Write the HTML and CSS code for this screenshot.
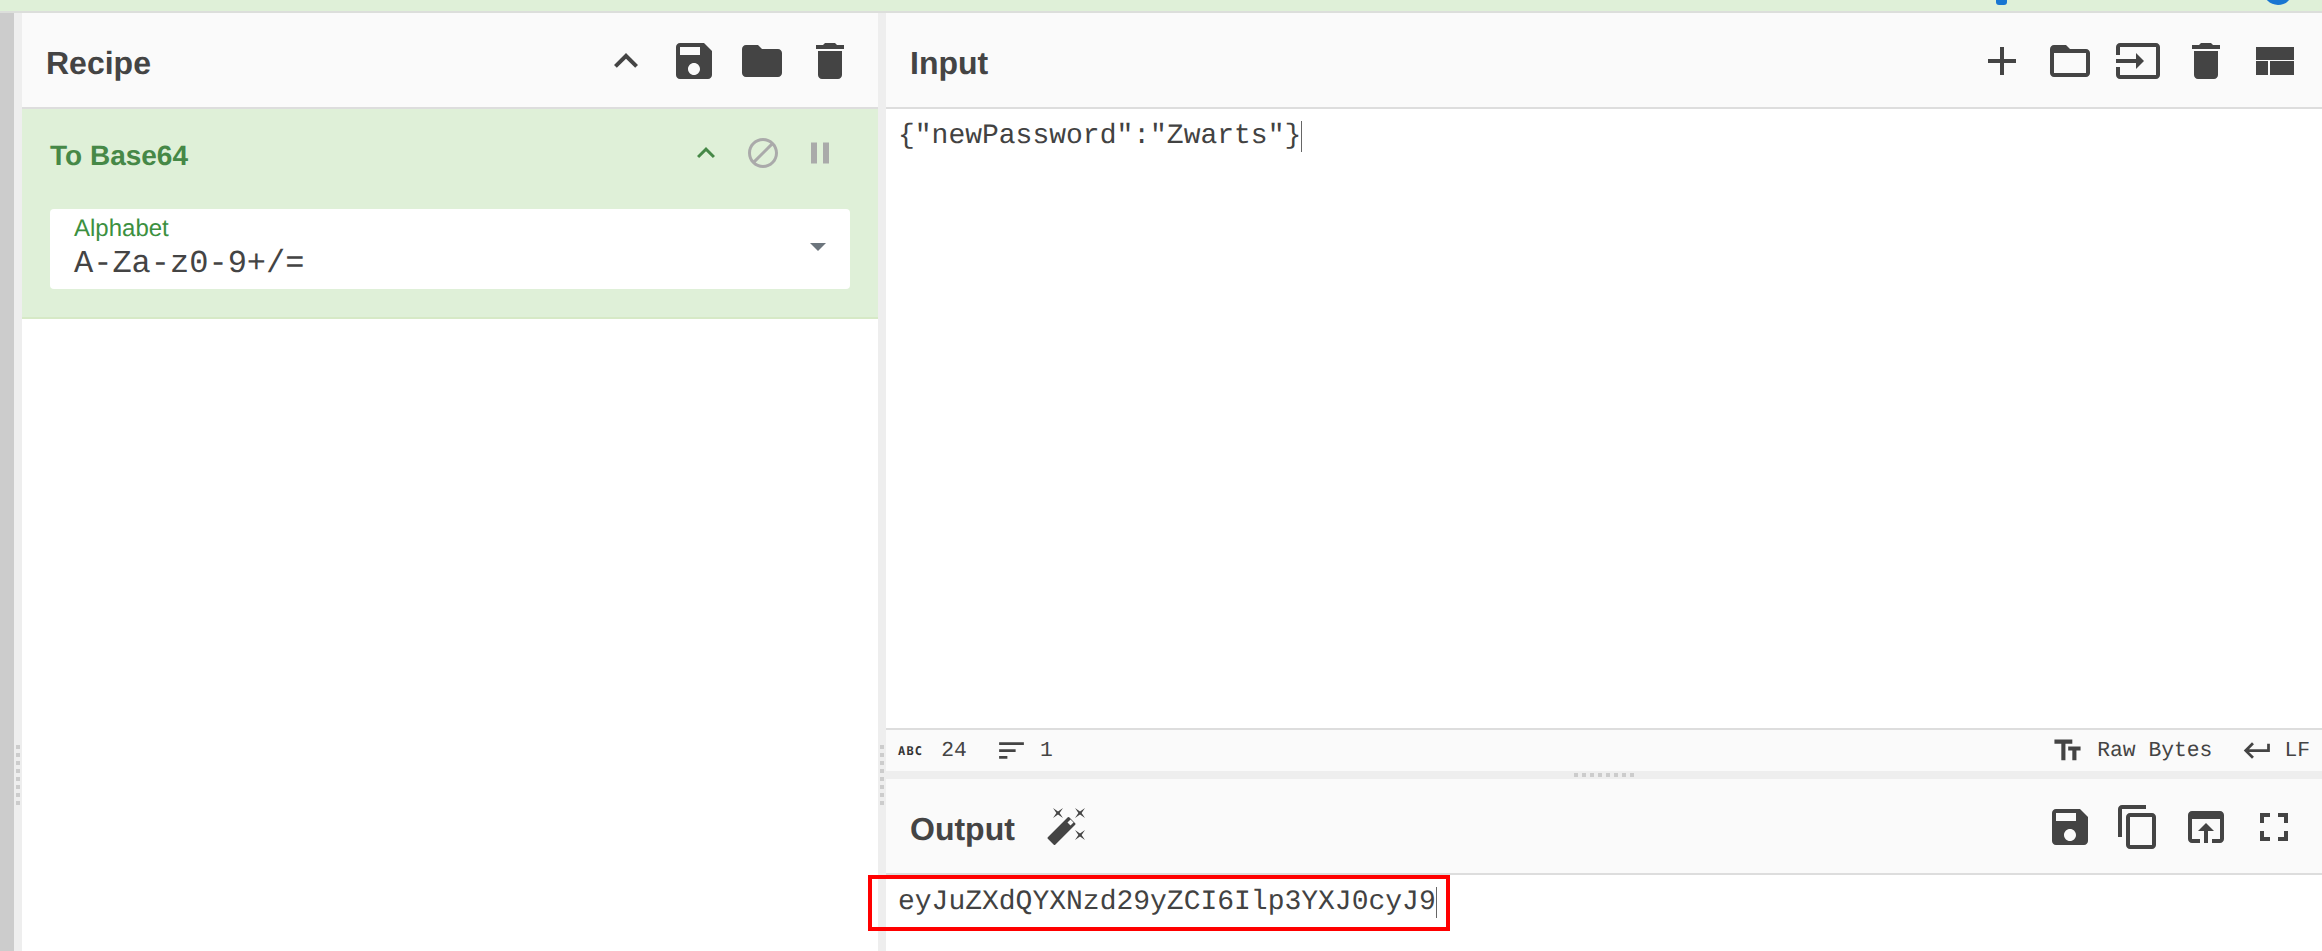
FILE: index.html
```html
<!DOCTYPE html>
<html lang="en">
<head>
<meta charset="utf-8">
<title>CyberChef</title>
<link rel="stylesheet" href="styles.css">
</head>
<body>
<div class="topstrip">
  <span class="blue-tick"></span>
  <span class="blue-dot"></span>
</div>
<main class="workspace">
  <div class="rail"></div>
  <div class="gutter-v"></div>
  <section class="recipe">
    <header class="panel-head">
      <h1 class="title">Recipe</h1>
      <div class="tools">
        <svg class="ico" viewBox="0 0 24 24"><path d="M7.41 15.41L12 10.83l4.59 4.58L18 14l-6-6-6 6z"/></svg>
        <svg class="ico" viewBox="0 0 24 24"><path d="M17 3H5c-1.11 0-2 .9-2 2v14c0 1.1.89 2 2 2h14c1.1 0 2-.9 2-2V7l-4-4zm-5 16c-1.66 0-3-1.34-3-3s1.34-3 3-3 3 1.34 3 3-1.34 3-3 3zm3-10H5V5h10v4z"/></svg>
        <svg class="ico" viewBox="0 0 24 24"><path d="M10 4H4c-1.1 0-1.99.9-1.99 2L2 18c0 1.1.9 2 2 2h16c1.1 0 2-.9 2-2V8c0-1.1-.9-2-2-2h-8l-2-2z"/></svg>
        <svg class="ico" viewBox="0 0 24 24"><path d="M6 19c0 1.1.9 2 2 2h8c1.1 0 2-.9 2-2V7H6v12zM19 4h-3.5l-1-1h-5l-1 1H5v2h14V4z"/></svg>
      </div>
    </header>
    <div class="op">
      <div class="op-head">
        <h2 class="op-name">To Base64</h2>
        <div class="op-tools">
          <svg class="ico-s green" viewBox="0 0 24 24"><path d="M7.41 15.41L12 10.83l4.59 4.58L18 14l-6-6-6 6z"/></svg>
          <svg class="ico-s grey" viewBox="0 0 24 24"><path d="M12 2C6.48 2 2 6.48 2 12s4.48 10 10 10 10-4.48 10-10S17.52 2 12 2zM4 12c0-4.42 3.58-8 8-8 1.85 0 3.55.63 4.9 1.69L5.69 16.9C4.63 15.55 4 13.85 4 12zm8 8c-1.85 0-3.55-.63-4.9-1.69L18.31 7.1C19.37 8.45 20 10.15 20 12c0 4.42-3.58 8-8 8z"/></svg>
          <svg class="ico-s grey" viewBox="0 0 24 24"><path d="M6 19h4V5H6v14zm8-14v14h4V5h-4z"/></svg>
        </div>
      </div>
      <div class="field">
        <div class="field-body">
          <div class="field-label">Alphabet</div>
          <div class="field-value">A-Za-z0-9+/=</div>
        </div>
        <span class="caret"></span>
      </div>
    </div>
  </section>
  <div class="gutter-v"></div>
  <section class="io">
    <header class="panel-head">
      <h1 class="title">Input</h1>
      <div class="tools">
        <svg class="ico" viewBox="0 0 24 24"><path d="M19 13h-6v6h-2v-6H5v-2h6V5h2v6h6v2z"/></svg>
        <svg class="ico" viewBox="0 0 24 24"><path d="M20 6h-8l-2-2H4c-1.1 0-1.99.9-1.99 2L2 18c0 1.1.9 2 2 2h16c1.1 0 2-.9 2-2V8c0-1.1-.9-2-2-2zm0 12H4V8h16v10z"/></svg>
        <svg class="ico" viewBox="0 0 24 24"><path d="M21 3.01H3c-1.1 0-2 .9-2 2V9h2V4.99h18v14.03H3V15H1v4.01c0 1.1.9 1.98 2 1.98h18c1.1 0 2-.88 2-1.98v-14c0-1.11-.9-2-2-2zM11 16l4-4-4-4v3H1v2h10v3z"/></svg>
        <svg class="ico" viewBox="0 0 24 24"><path d="M6 19c0 1.1.9 2 2 2h8c1.1 0 2-.9 2-2V7H6v12zM19 4h-3.5l-1-1h-5l-1 1H5v2h14V4z"/></svg>
        <svg class="ico" viewBox="0 0 24 24"><path d="M3 5h19v6.500H3zM3 12h6v7H3zM10 12h12v7H10z"/></svg>
      </div>
    </header>
    <div class="input-text"><span class="code">{"newPassword":"Zwarts"}</span><span class="cursor"></span></div>
    <div class="status">
      <span class="abc">ABC</span>
      <span class="stat-num">24</span>
      <svg class="ico-t sort" viewBox="0 0 24 24"><path d="M3 18h6v-2H3v2zM3 6v2h18V6H3zm0 7h12v-2H3v2z"/></svg>
      <span class="stat-num">1</span>
      <span class="spacer"></span>
      <svg class="ico-t" viewBox="0 0 24 24"><path d="M2.500 4v3h5v12h3V7h5V4h-13zm19 5h-9v3h3v7h3v-7h3V9z"/></svg>
      <span class="stat-num enc">Raw Bytes</span>
      <svg class="ico-t" viewBox="0 0 24 24"><path d="M19 7v4H5.830l3.580-3.590L8 6l-6 6 6 6 1.410-1.410L5.830 13H21V7h-2z"/></svg>
      <span class="stat-num lf">LF</span>
    </div>
    <div class="gutter-h"></div>
    <header class="panel-head">
      <div class="title-row">
        <h1 class="title">Output</h1>
        <svg class="ico" viewBox="0 0 48 48">
          <path class="wand-body" d="M7.500 35l20-20 6 6-20 20z"/>
          <path class="wand-tip" d="M29.500 16.500l3 3-3 3-3-3z"/>
          <path d="M12 5l5 3.400L22 5l-3.400 5L22 15l-5-3.400L12 15l3.400-5zM34 5l5 3.400L44 5l-3.400 5L44 15l-5-3.400L34 15l3.400-5zM34 27l5 3.400L44 27l-3.400 5L44 37l-5-3.400L34 37l3.400-5z"/>
        </svg>
      </div>
      <div class="tools">
        <svg class="ico" viewBox="0 0 24 24"><path d="M17 3H5c-1.11 0-2 .9-2 2v14c0 1.1.89 2 2 2h14c1.1 0 2-.9 2-2V7l-4-4zm-5 16c-1.66 0-3-1.34-3-3s1.34-3 3-3 3 1.34 3 3-1.34 3-3 3zm3-10H5V5h10v4z"/></svg>
        <svg class="ico" viewBox="0 0 24 24"><path d="M16 1H4c-1.1 0-2 .9-2 2v14h2V3h12V1zm3 4H8c-1.1 0-2 .9-2 2v14c0 1.1.9 2 2 2h11c1.1 0 2-.9 2-2V7c0-1.1-.9-2-2-2zm0 16H8V7h11v14z"/></svg>
        <svg class="ico" viewBox="0 0 24 24"><path d="M19 4H5c-1.11 0-2 .9-2 2v12c0 1.1.89 2 2 2h4v-2H5V8h14v10h-4v2h4c1.1 0 2-.9 2-2V6c0-1.1-.89-2-2-2zm-7 6l-4 4h3v6h2v-6h3l-4-4z"/></svg>
        <svg class="ico" viewBox="0 0 24 24"><path d="M7 14H5v5h5v-2H7v-3zm-2-4h2V7h3V5H5v5zm12 7h-3v2h5v-5h-2v3zM14 5v2h3v3h2V5h-5z"/></svg>
      </div>
    </header>
    <div class="output-text">
      <span class="code">eyJuZXdQYXNzd29yZCI6Ilp3YXJ0cyJ9</span><span class="cursor"></span>
      <div class="highlight"></div>
    </div>
  </section>
</main>
</body>
</html>
```
FILE: styles.css
```css
* { box-sizing: border-box; }
html, body { margin: 0; padding: 0; height: 100%; overflow: hidden; background: #fff; }
body { display: flex; flex-direction: column; font-family: "Liberation Sans", Arial, sans-serif; color: #444; text-rendering: geometricPrecision; }

.topstrip { position: relative; flex: 0 0 13px; background: #dff0d8; border-bottom: 2px solid #dcdedb; overflow: hidden; }
.blue-tick { position: absolute; left: 1996px; top: 0; width: 11px; height: 5px; background: #1976d2; border-radius: 0 0 3px 3px; }
.blue-dot { position: absolute; left: 2263px; top: -25px; width: 30px; height: 30px; background: #1976d2; border-radius: 50%; }

.workspace { flex: 1; display: flex; min-height: 0; }
.rail { flex: 0 0 14px; background: #ccc; }
.gutter-v { flex: 0 0 8px; background-color: #eee; background-image: repeating-linear-gradient(#ccc 0 4px, transparent 4px 8px); background-size: 4px 64px; background-position: 2px 732px; background-repeat: no-repeat; }
.recipe { flex: 0 0 856px; display: flex; flex-direction: column; background: #fff; }
.io { flex: 1; min-width: 0; display: flex; flex-direction: column; background: #fff; }

.panel-head { flex: 0 0 96px; display: flex; justify-content: space-between; align-items: flex-start; padding: 24px 24px 0 24px; background: #fafafa; border-bottom: 2px solid #ddd; }
.title { margin: 0; padding-top: 2px; font-size: 32px; line-height: 48px; font-weight: 700; color: #444; }
.title-row { display: flex; gap: 26px; }
.tools { display: flex; gap: 20px; }
.ico { display: block; width: 48px; height: 48px; fill: #444; }
.wand-body { stroke: #444; stroke-width: 2; stroke-linejoin: round; }
.wand-tip { fill: #fafafa; }

.op { flex: 0 0 210px; padding: 26px 28px 0; background: #dff0d8; border-bottom: 2px solid #d6e9c6; }
.op-head { display: flex; justify-content: space-between; align-items: flex-start; height: 74px; }
.op-name { margin: 0; font-size: 28px; line-height: 42px; font-weight: 700; color: #468847; }
.op-tools { display: flex; gap: 21px; padding-right: 12px; }
.ico-s { display: block; width: 36px; height: 36px; }
.green { fill: #468847; }
.grey { fill: #aaa; }

.field { display: flex; justify-content: space-between; align-items: flex-start; height: 80px; padding: 6px 24px 0 24px; background: #fff; border-radius: 4px; }
.field-label { font-size: 24px; line-height: 28px; color: #3c9040; }
.field-value { margin-top: 3px; font-family: "Liberation Mono", monospace; font-size: 32px; line-height: 36px; color: #444; }
.caret { width: 0; height: 0; margin-top: 28px; border-left: 8px solid transparent; border-right: 8px solid transparent; border-top: 8px solid #6c757d; }

.code { font-family: "Liberation Mono", monospace; font-size: 28px; line-height: 38px; color: #424242; }
.cursor { display: inline-block; width: 1px; height: 31px; background: #666; vertical-align: -8.5px; }
.input-text { flex: 0 0 619px; padding: 9px 12px; }

.status { flex: 0 0 43px; display: flex; align-items: center; padding: 0 12px; background: #fafafa; border-top: 2px solid #ddd; font-family: "Liberation Mono", monospace; font-size: 21.33px; color: #444; }
.abc { flex: 0 0 24px; font-family: "DejaVu Sans Mono", monospace; font-weight: 700; font-size: 12px; letter-spacing: 1.2px; color: #333; }
.stat-num { margin-left: 18px; }
.ico-t { display: block; width: 33px; height: 33px; fill: #444; }
.sort { margin-left: 28px; }
.sort + .stat-num { margin-left: 12px; }
.spacer { flex: 1; }
.enc { margin-left: 13px; margin-right: 29px; }
.lf { margin-left: 10px; }

.gutter-h { flex: 0 0 8px; background-color: #eee; background-image: repeating-linear-gradient(90deg, #ccc 0 4px, transparent 4px 8px); background-size: 64px 4px; background-position: 688px 2px; background-repeat: no-repeat; }

.output-text { position: relative; flex: 1; padding: 9px 12px; }
.highlight { position: absolute; left: -18px; top: 0; width: 582px; height: 56px; border: 4px solid #f00; }
```
